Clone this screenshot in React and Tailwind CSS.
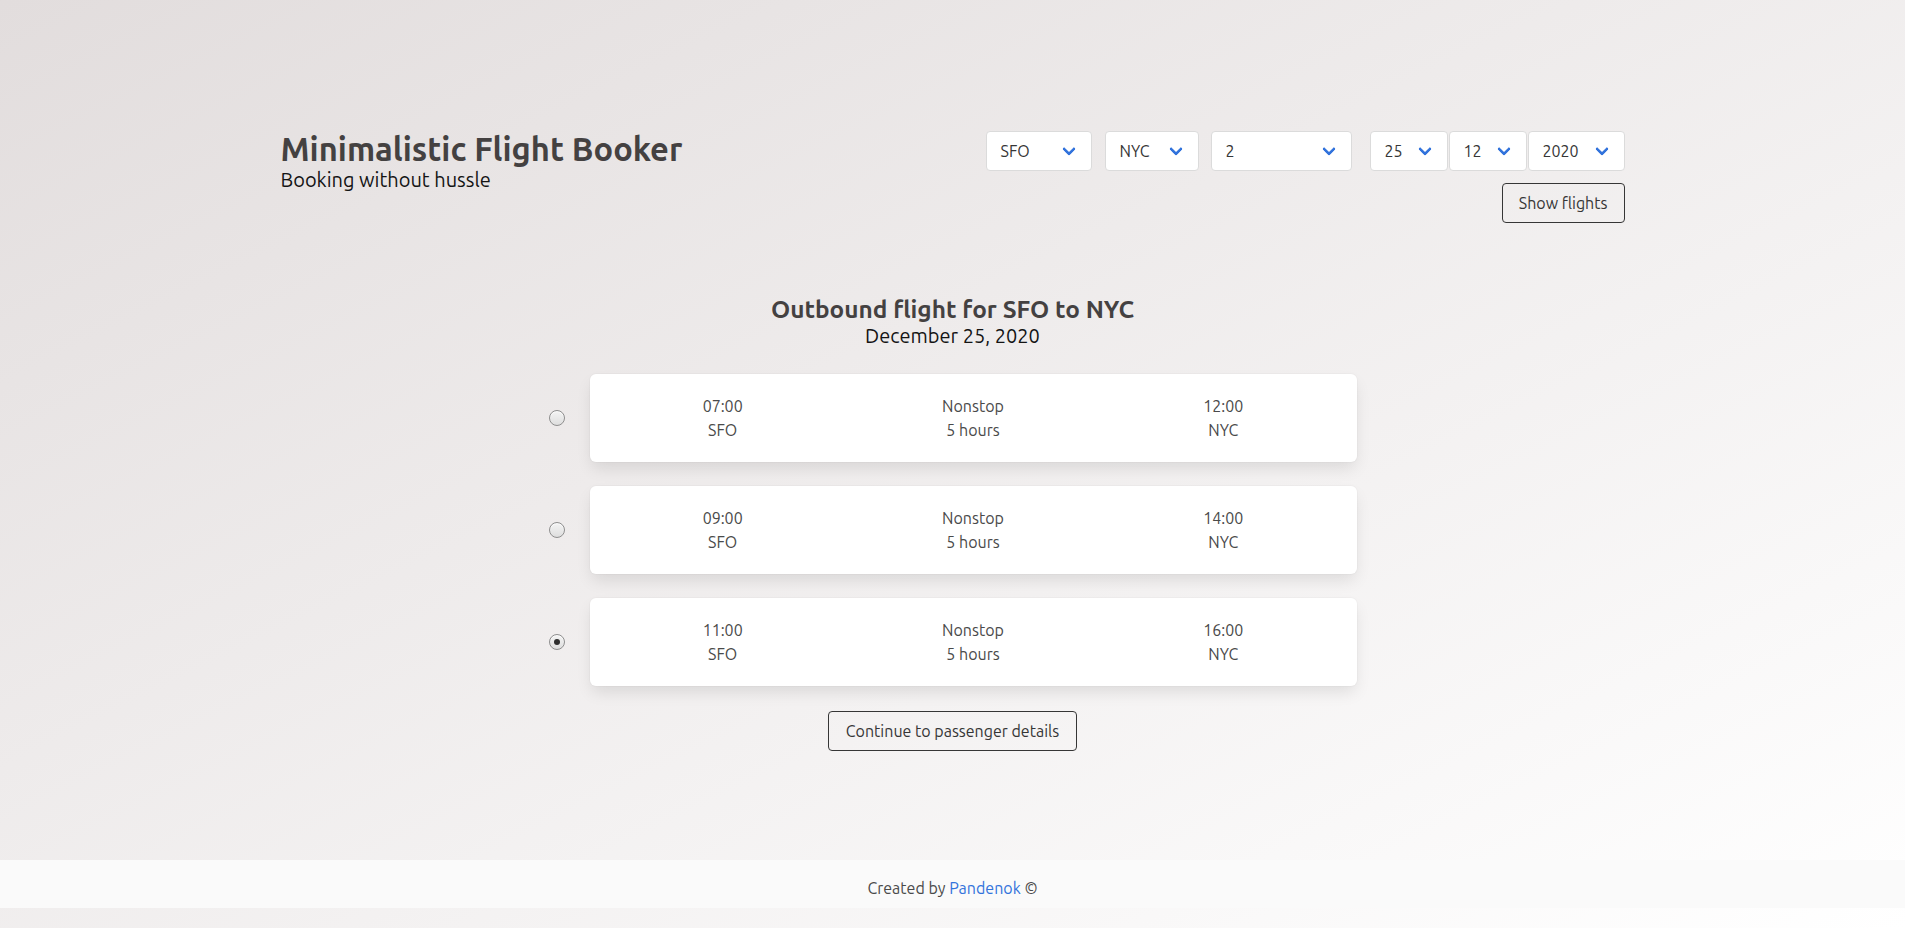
const font = { fontFamily: '"Ubuntu", Lato, "Noto Sans", sans-serif' }

const flights = [
    { dep: '07:00', arr: '12:00', checked: false },
    { dep: '09:00', arr: '14:00', checked: false },
    { dep: '11:00', arr: '16:00', checked: true },
]

function Select({ value, width, className = '' }) {
    return (
        <div
            className={`flex h-10 items-center justify-between rounded border border-[#dbdbdb] bg-white pl-[14px] pr-[17px] text-base text-[#363636] ${className}`}
            style={{ width }}
        >
            <span>{value}</span>
            <span className="mb-[5px] block h-[10px] w-[10px] -rotate-45 rounded-[2px] border-b-[3px] border-l-[3px] border-[#3273dc]" />
        </div>
    )
}

function Radio({ checked }) {
    return (
        <span className="flex h-[16px] w-[16px] shrink-0 items-center justify-center rounded-full border border-[#8e8e8e] bg-gradient-to-b from-[#f4f4f4] to-[#dedede] shadow-[inset_0_1px_1px_rgba(255,255,255,0.8)]">
            {checked && <span className="h-[6px] w-[6px] rounded-full bg-[#2e2e2e]" />}
        </span>
    )
}

function FlightRow({ flight }) {
    return (
        <div className="flex items-center justify-center gap-[25px]">
            <Radio checked={flight.checked} />
            <div className="grid w-[767px] grid-cols-3 rounded-md bg-white px-2 py-5 text-center text-base leading-6 text-[#4a4a4a] shadow-[0_8px_16px_-2px_rgba(10,10,10,0.1),0_0_0_1px_rgba(10,10,10,0.02)]">
                <div>
                    <p>{flight.dep}</p>
                    <p>SFO</p>
                </div>
                <div>
                    <p>Nonstop</p>
                    <p>5 hours</p>
                </div>
                <div>
                    <p>{flight.arr}</p>
                    <p>NYC</p>
                </div>
            </div>
        </div>
    )
}

export default function App() {
    return (
        <div
            className="flex min-h-screen flex-col bg-gradient-to-br from-[#e2dddd] to-[#ffffff]"
            style={font}
        >
            {/* Header */}
            <header className="mx-auto flex w-[1344px] items-start justify-between pt-[131px]">
                <div>
                    <h1 className="text-[32.7px] font-bold leading-9 text-[#444141]">Minimalistic Flight Booker</h1>
                    <p className="text-xl leading-[25px] text-[#141414]">Booking without hussle</p>
                </div>
                <div className="flex flex-col items-end gap-3">
                    <div className="flex items-center">
                        <Select value="SFO" width={106} />
                        <Select value="NYC" width={94} className="ml-[13px]" />
                        <Select value="2" width={141} className="ml-3" />
                        <Select value="25" width={78} className="ml-[18px]" />
                        <Select value="12" width={78} className="ml-px" />
                        <Select value="2020" width={97} className="ml-px" />
                    </div>
                    <button
                        type="button"
                        className="h-10 rounded border border-[#363636] px-4 text-base text-[#363636]"
                    >
                        Show flights
                    </button>
                </div>
            </header>

            {/* Flight list */}
            <main className="mt-[71px] flex flex-col items-center">
                <h2 className="text-[24.4px] font-bold leading-[30px] text-[#444141]">Outbound flight for SFO to NYC</h2>
                <p className="text-xl leading-6 text-[#141414]">December 25, 2020</p>

                <div className="mt-[26px] flex flex-col gap-6">
                    {flights.map((f) => (
                        <FlightRow key={f.dep} flight={f} />
                    ))}
                </div>

                <button
                    type="button"
                    className="mt-[25px] h-10 rounded border border-[#363636] px-[17px] text-base text-[#363636]"
                >
                    Continue to passenger details
                </button>
            </main>

            {/* Footer */}
            <footer className="mb-5 mt-auto bg-[#fafafa] pb-2 pt-4 text-center text-base leading-6 text-[#4a4a4a]">
                Created by <a href="#" className="text-[#3273dc]">Pandenok</a> ©
            </footer>
        </div>
    )
}
